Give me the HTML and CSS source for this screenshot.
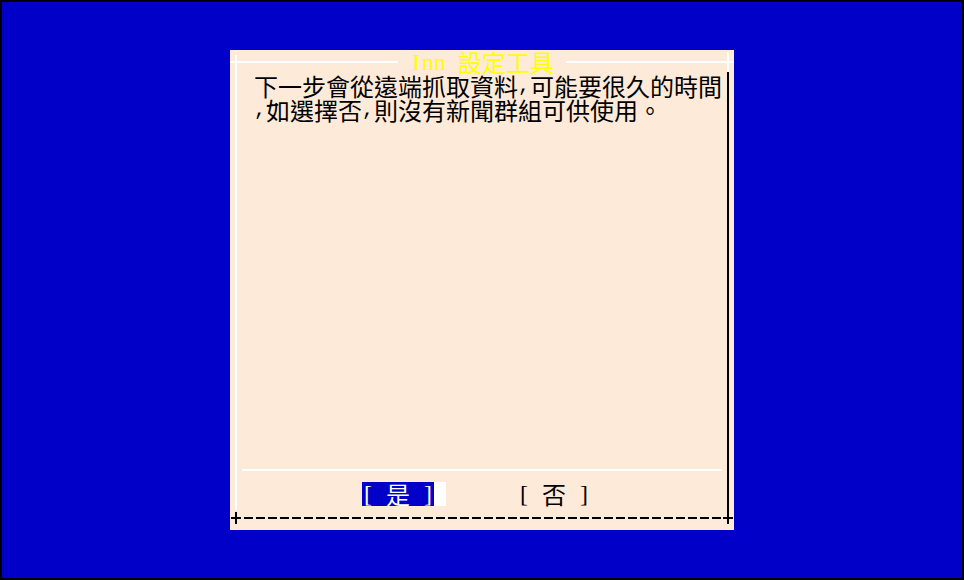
FILE: index.html
```html
<!DOCTYPE html>
<html lang="zh-Hant">
<head>
<meta charset="utf-8">
<title>Inn 設定工具</title>
<link rel="stylesheet" href="styles.css">
</head>
<body>
<div class="screen">
  <div class="dialog">
    <div class="edge-left"></div>
    <div class="edge-right"></div>
    <div class="top-border"><span class="title"><span class="h latin">I</span><span class="h latin">n</span><span class="h latin">n</span><span class="h"> </span>設定工具</span></div>
    <div class="body">
      <div class="line">下一步會從遠端抓取資料<span class="h">,</span>可能要很久的時間</div>
      <div class="line"><span class="h">,</span>如選擇否<span class="h">,</span>則沒有新聞群組可供使用。</div>
    </div>
    <div class="sep"></div>
    <div class="buttons">
      <div class="btn active"><span class="h br">[</span><span class="label">是</span><span class="h br">]</span></div>
      <div class="cursor"></div>
      <div class="btn second"><span class="h br">[</span><span class="label">否</span><span class="h br">]</span></div>
    </div>
    <div class="bottom-border"><span class="plus"></span><span class="dashes"></span><span class="plus"></span></div>
  </div>
</div>
</body>
</html>
```

FILE: styles.css
```css
* { box-sizing: border-box; }
html, body { margin: 0; padding: 0; }
body { background: #000; }

.screen {
  width: 964px;
  height: 580px;
  border: 2px solid #000;
  background: #0000c8;
  display: flex;
  align-items: center;
  justify-content: center;
  font-family: "Noto Sans CJK TC", "Noto Sans CJK SC", sans-serif;
  font-size: 24px;
  line-height: 24px;
  color: #000;
}

.dialog {
  width: 504px;
  height: 480px;
  background: #feead8;
  display: grid;
  grid-template-columns: 12px 480px 12px;
  grid-template-rows: 24px 384px 24px 24px 24px;
}

.edge-left {
  grid-column: 1;
  grid-row: 1 / 5;
  width: 2px;
  margin: 5px 0 -4px 5px;
  background: #fff;
}

.edge-right {
  grid-column: 3;
  grid-row: 1 / 6;
  width: 2px;
  margin: 2px 0 12px 5px;
  background: linear-gradient(#fff 0 20px, #000 20px);
}

.top-border {
  grid-column: 1 / -1;
  grid-row: 1;
  display: flex;
  align-items: center;
}
.top-border::before,
.top-border::after {
  content: "";
  flex: 1;
  height: 2px;
  background: #fff;
}
.title {
  padding: 0 12px;
  background: #feead8;
  color: #ffff00;
  white-space: nowrap;
}

.h {
  display: inline-block;
  width: 12px;
  text-align: center;
  font-family: "Liberation Mono", monospace;
  font-size: 20px;
  white-space: pre;
  vertical-align: top;
}
.h.latin {
  font-family: "Liberation Serif", serif;
  font-size: 24px;
}
.h.br {
  font-family: "Liberation Serif", serif;
  font-size: 24px;
}

.body {
  grid-column: 2;
  grid-row: 2;
  padding-left: 12px;
  white-space: nowrap;
}

.sep {
  grid-column: 2;
  grid-row: 3;
  align-self: center;
  height: 2px;
  background: #fff;
}

.buttons {
  grid-column: 2;
  grid-row: 4;
  display: flex;
  padding-left: 120px;
}
.btn { display: flex; }
.btn.active { background: #0000c8; color: #fff; }
.btn .label { margin: 0 12px; }
.btn.second { margin-left: 72px; }
.cursor { width: 12px; background: #fff; }

.bottom-border {
  grid-column: 1 / -1;
  grid-row: 5;
  display: flex;
  align-items: center;
}
.plus {
  width: 12px;
  height: 24px;
  background:
    linear-gradient(#000, #000) center / 10px 2px no-repeat,
    linear-gradient(#000, #000) center / 2px 12px no-repeat;
}
.dashes {
  flex: 1;
  height: 2px;
  background: repeating-linear-gradient(to right, transparent 0 2px, #000 2px 11px, transparent 11px 12px);
}
```
